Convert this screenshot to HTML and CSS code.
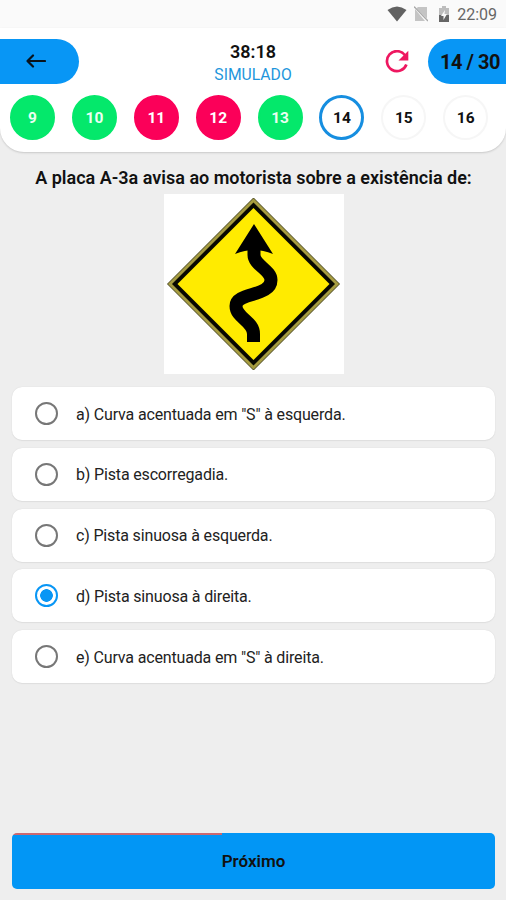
FILE: index.html
```html
<!DOCTYPE html>
<html lang="pt-BR">
<head>
<meta charset="utf-8">
<title>Simulado</title>
<link rel="stylesheet" href="styles.css">
</head>
<body>
<div class="status">
  <svg width="20" height="16" viewBox="0 0 20 16"><path d="M.5 4Q10-3 19.500 4L10 15.500z" fill="#626262"/></svg>
  <svg class="sim" width="14" height="16" viewBox="0 0 14 16"><path d="M1 3v12h10zM4 1h9v11.500L2.500 2.200z" fill="#c4c4c4"/><path d="M0 .5L14 15" stroke="#aaa" stroke-width="1.300"/></svg>
  <svg class="battery" width="12" height="16" viewBox="0 0 12 16"><path d="M1 2h3V0h4v2h3v7H1z" fill="#bdbdbd"/><path d="M1 9h10v7H1z" fill="#666"/><path d="M7 4L3 10h2.500v4L9 8H6.500z" fill="#fafafa"/></svg>
  <span class="clock">22:09</span>
</div>
<header class="header">
  <div class="bar">
    <div class="back"><svg width="20" height="14" viewBox="0 0 20 14"><path d="M7 1.500L1.500 7 7 12.500M1.500 7H19" fill="none" stroke="#08131d" stroke-width="2.200" stroke-linecap="round" stroke-linejoin="round"/></svg></div>
    <div class="title"><div class="timer">38:18</div><div class="mode">SIMULADO</div></div>
    <div class="right">
      <svg width="24" height="24" viewBox="0 0 24 24"><path d="M20 5.200A10 10 0 1 0 21.400 14.500" fill="none" stroke="#ee1760" stroke-width="2.700"/><path d="M23.300.8V10.500H13.500z" fill="#ee1760"/></svg>
      <div class="count">14 / 30</div>
    </div>
  </div>
  <div class="steps">
    <span class="step ok">9</span><span class="step ok">10</span><span class="step bad">11</span><span class="step bad">12</span><span class="step ok">13</span><span class="step current">14</span><span class="step">15</span><span class="step">16</span>
  </div>
</header>
<main class="main">
  <h1 class="question">A placa A-3a avisa ao motorista sobre a existência de:</h1>
  <svg class="sign" width="180" height="180" viewBox="0 0 180 180">
    <path fill="#fff" d="M0 0h180v180H0z"/>
    <path d="M89.500 4L175.500 90 89.500 176 3.500 90z" fill="#a69c40" stroke="#47451d" stroke-width="1"/>
    <path d="M89.500 8.500L171 90 89.500 171.500 8 90z" fill="#080800"/>
    <path d="M89.500 14L165.500 90 89.500 166 13.500 90z" fill="#ffeb00"/>
    <path d="M89.500 148V140C89.500 127 72 124 72 112C72 98 107 103 107 86C107 76 90 71 90 61V52" fill="none" stroke="#000" stroke-width="13"/>
    <path d="M90 30L109 60Q99 56 90 56T71 60z"/>
  </svg>
  <div class="options">
    <label class="option"><i class="radio"></i><span>a) Curva acentuada em "S" à esquerda.</span></label>
    <label class="option"><i class="radio"></i><span>b) Pista escorregadia.</span></label>
    <label class="option"><i class="radio"></i><span>c) Pista sinuosa à esquerda.</span></label>
    <label class="option"><i class="radio on"></i><span>d) Pista sinuosa à direita.</span></label>
    <label class="option"><i class="radio"></i><span>e) Curva acentuada em "S" à direita.</span></label>
  </div>
  <div class="next">Próximo</div>
</main>
</body>
</html>
```
FILE: styles.css
```css
* { box-sizing: border-box; }
body { margin: 0; width: 506px; height: 900px; overflow: hidden; background: #eee; color: #111; font-family: Roboto, sans-serif; display: flex; flex-direction: column; }
svg { display: block; flex: none; }
.status { height: 28px; flex: none; background: #fafafa; display: flex; justify-content: flex-end; align-items: center; padding-right: 9px; }
.sim { margin-left: 7px; }
.battery { margin-left: 10px; }
.clock { margin-left: 7px; font-size: 16px; line-height: 28px; color: #666; padding-top: 1px; }
.header { height: 124px; flex: none; background: #fff; border-radius: 0 0 24px 24px; box-shadow: 0 1px 2px #c8c8c8; padding-top: 11px; }
.bar { height: 45px; display: grid; grid-template-columns: 1fr 120px 1fr; grid-template-rows: 45px; }
.back { width: 79px; height: 45px; background: #0896f5; border-radius: 0 23px 23px 0; padding: 15px 0 0 26px; }
.title { text-align: center; }
.timer { font-size: 18px; line-height: 22px; font-weight: 600; padding-top: 2px; }
.mode { font-size: 15.700px; line-height: 23px; color: #1e96dc; }
.right { display: flex; align-items: center; justify-content: flex-end; gap: 19px; }
.count { width: 78px; height: 45px; background: #0896f5; border-radius: 23px 0 0 23px; font-size: 20px; line-height: 46px; font-weight: 700; letter-spacing: -.45px; padding-left: 12px; white-space: nowrap; }
.steps { display: flex; gap: 16.9px; padding: 11px 0 0 10px; }
.step { width: 45px; height: 45px; flex: none; border-radius: 50%; border: 2px solid #f6f6f6; font-size: 15.500px; line-height: 43px; font-weight: 700; text-align: center; }
.ok { background: #04e86b; border-color: #04e86b; color: #eafff2; }
.bad { background: #fb0059; border-color: #fb0059; color: #fff; }
.current { border: 3px solid #168ee0; line-height: 41px; }
.main { flex: 1; display: flex; flex-direction: column; padding: 14px 11px 11px 12px; }
.question { margin: 0; font-size: 18px; line-height: 24px; font-weight: 600; text-align: center; white-space: nowrap; }
.sign { margin: 4px auto 0 151.500px; }
.options { display: flex; flex-direction: column; gap: 7.800px; padding-top: 13px; }
.option { height: 53px; display: flex; align-items: center; background: #fff; border-radius: 10px; box-shadow: 0 1px 1px #dedede, 0 0 1px #ccc; padding-left: 23px; gap: 18px; font-size: 16px; letter-spacing: -.16px; padding-top: 1px; color: #222; }
.radio { width: 23px; height: 23px; border: 2px solid #777; border-radius: 50%; margin-top: -1px; }
.on { border-color: #0896f5; background: radial-gradient(circle, #0896f5 0 6px, #fff 6.600px); }
.next { margin-top: auto; height: 56px; border-radius: 5px; background: linear-gradient(#cb6870, #cb6870) 0 0 / 210px 2px no-repeat #0296f5; text-align: center; font-size: 17px; font-weight: 600; line-height: 56px; }
```
